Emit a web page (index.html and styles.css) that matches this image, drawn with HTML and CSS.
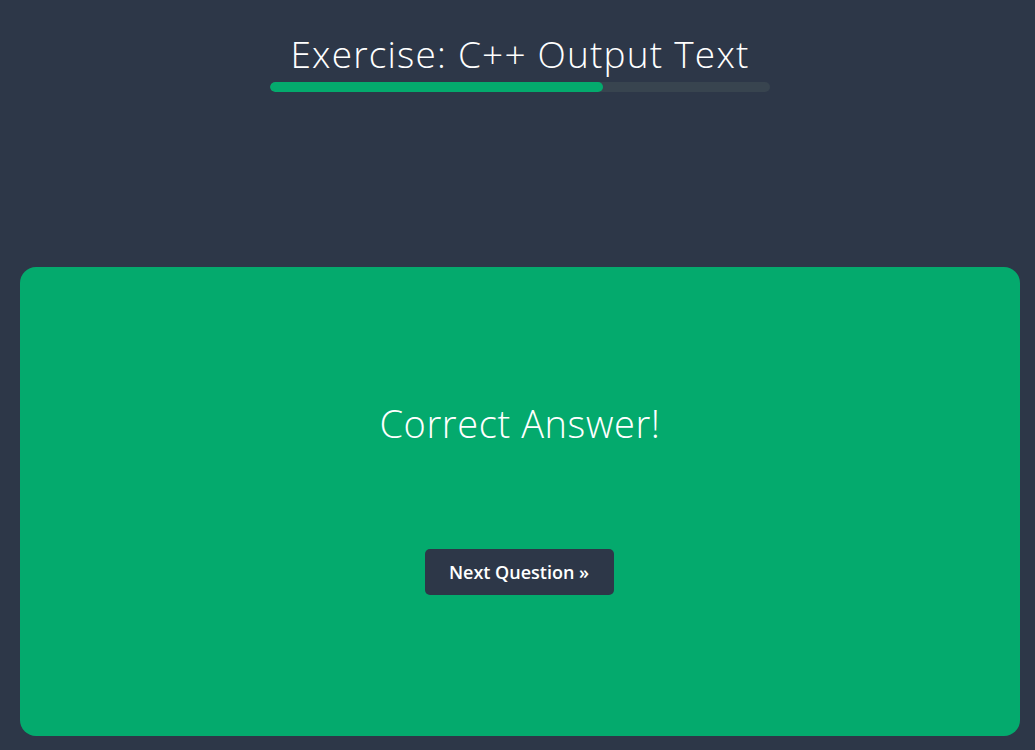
FILE: index.html
```html
<!DOCTYPE html>
<html>
<head>
<meta charset="utf-8">
<link rel="stylesheet" href="styles.css">
</head>
<body>
<div class="page">
  <header class="top">
    <h1 class="title">Exercise: C++ Output Text</h1>
    <div class="progress"><div class="progress-fill" style="width:66.6%"></div></div>
  </header>
  <main class="card">
    <h2 class="result">Correct Answer!</h2>
    <button class="next">Next Question »</button>
  </main>
</div>
</body>
</html>
```
FILE: styles.css
```css
html, body { margin: 0; padding: 0; }
body {
  background: #2d3748;
  height: 750px;
  overflow: hidden;
  font-family: "Open Sans", "Noto Sans", sans-serif;
  color: #fff;
}
.page {
  width: 1040px;
}
.top {
  display: flex;
  flex-direction: column;
  align-items: center;
  padding-top: 30px;
}
.title {
  margin: 0;
  font-weight: 300;
  font-size: 37px;
  line-height: 48px;
  letter-spacing: 1.2px;
}
.progress {
  margin-top: 4px;
  width: 500px;
  height: 10px;
  border-radius: 5px;
  background: #38444f;
  overflow: hidden;
}
.progress-fill {
  height: 100%;
  background: #04aa6d;
  border-radius: 5px;
}
.card {
  margin: 175px 20px 0 20px;
  height: 469px;
  background: #04aa6d;
  border-radius: 16px;
  display: flex;
  flex-direction: column;
  align-items: center;
  box-sizing: border-box;
  padding-top: 130px;
}
.result {
  margin: 0;
  font-weight: 300;
  font-size: 38px;
  line-height: 52px;
  letter-spacing: 0.6px;
}
.next {
  margin-top: 100px;
  margin-right: 2px;
  background: #2d3748;
  color: #fff;
  border: none;
  border-radius: 5px;
  width: 189px;
  height: 46px;
  font-family: "Open Sans", "Noto Sans", sans-serif;
  font-weight: 600;
  font-size: 18px;
  padding: 0;
}
```
